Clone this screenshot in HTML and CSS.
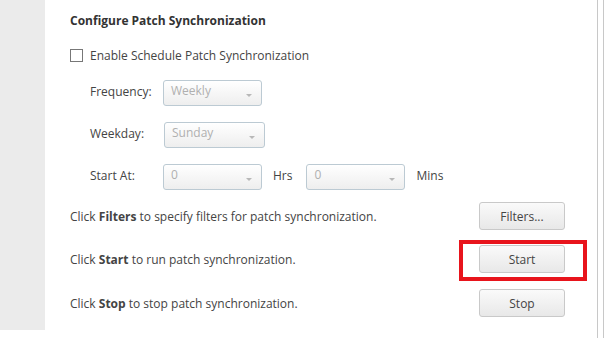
FILE: index.html
```html
<!DOCTYPE html>
<html lang="en">
<head>
  <meta charset="UTF-8">
  <meta name="viewport" content="width=device-width, initial-scale=1.0">
  <title>Configure Patch Synchronization</title>
  <link rel="stylesheet" href="styles.css">
</head>

<body>
  <div class="page">
    <div class="sidebar"></div>

    <div class="main">
      <h1 class="title">Configure Patch Synchronization</h1>

      <label class="check-row"><span class="checkbox"></span> Enable Schedule Patch Synchronization</label>

      <div class="field-row first">
        <span class="field-label">Frequency:</span>
        <div class="select">Weekly</div>
      </div>
      <div class="field-row">
        <span class="field-label">Weekday:</span>
        <div class="select select-wide">Sunday</div>
      </div>
      <div class="field-row">
        <span class="field-label">Start At:</span>
        <div class="select">0</div>
        <span class="unit">Hrs</span>
        <div class="select">0</div>
        <span class="unit">Mins</span>
      </div>

      <div class="action-row first">
        <p>Click <b>Filters</b> to specify filters for patch synchronization.</p>
        <button class="btn">Filters...</button>
      </div>
      <div class="action-row second">
        <p>Click <b>Start</b> to run patch synchronization.</p>
        <button class="btn highlighted">Start</button>
      </div>
      <div class="action-row">
        <p>Click <b>Stop</b> to stop patch synchronization.</p>
        <button class="btn">Stop</button>
      </div>
    </div>

    <div class="rail"></div>
  </div>
</body>
</html>
```

FILE: styles.css
```css
body {
  margin: 0;
  font-family: "Open Sans", Arial, sans-serif;
  font-size: 12px;
  color: #444;
  background: white;
}

.page {
  display: flex;
  height: 338px;
}

.sidebar {
  width: 45px;
  height: 330px;
  background-color: #ebebeb;
}

.main {
  width: 527px;
  padding-left: 25px;
  border-right: 1px solid #c8c8c8;
}

.title {
  margin: 12px 0 0;
  height: 24px;
  font-size: 12px;
  font-weight: bold;
  color: #333;
}

.check-row {
  display: flex;
  align-items: center;
  gap: 7px;
  height: 24px;
  margin-top: 7px;
}

.checkbox {
  width: 11px;
  height: 11px;
  border: 1px solid #777;
  background: white;
}

.field-row {
  display: flex;
  align-items: center;
  height: 26px;
  margin-top: 16px;
  padding-left: 20px;
}

.field-row.first {
  margin-top: 13px;
}

.field-label {
  width: 73px;
  padding-bottom: 3px;
}

.select {
  position: relative;
  box-sizing: border-box;
  width: 99px;
  height: 26px;
  padding: 1px 7px;
  border: 1px solid #bccad3;
  border-radius: 3px;
  background: linear-gradient(#ffffff, #eeeeee);
  color: #b0b0b0;
}

.select-wide {
  width: 101px;
  margin-left: 1px;
}

.select::after {
  content: "";
  position: absolute;
  right: 9px;
  top: 13px;
  border-left: 3px solid transparent;
  border-right: 3px solid transparent;
  border-top: 3px solid #b8b8b8;
}

.unit {
  margin: 0 14px 0 11px;
  padding-bottom: 4px;
}

.action-row {
  display: flex;
  align-items: center;
  justify-content: space-between;
  height: 28px;
  margin-top: 16px;
  padding-right: 32px;
}

.action-row.first {
  margin-top: 12px;
}

.action-row.second {
  margin-top: 15px;
}

.action-row p {
  margin: 0;
}

.btn {
  position: relative;
  width: 86px;
  height: 28px;
  border: 1px solid #c9c9c9;
  border-radius: 3px;
  background: linear-gradient(#fafafa, #e8e8e8);
  font-family: "Open Sans", Arial, sans-serif;
  font-size: 12px;
  color: #444;
}

/* annotation box around the Start button */
.highlighted::after {
  content: "";
  position: absolute;
  left: -21px;
  top: -6px;
  width: 120px;
  height: 33px;
  border: 4px solid #e8141c;
}

.rail {
  width: 5px;
  border-right: 1px solid #c8c8c8;
}
```
